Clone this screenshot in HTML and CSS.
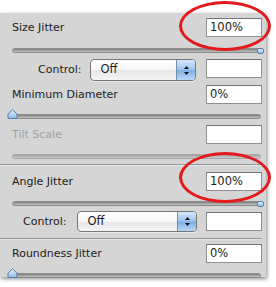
FILE: index.html
```html
<!DOCTYPE html>
<html>
  <head>
    <meta charset="utf-8" />
    <title>Shape Dynamics</title>
    <link rel="stylesheet" href="styles.css">
  </head>
  <body>
    <div class="page">
      <section class="panel">
        <div class="field">
          <span class="label">Size Jitter</span>
          <span class="box">100%</span>
        </div>
        <div class="track"><span class="knob knob-max"></span></div>

        <div class="field control">
          <span class="label">Control:</span>
          <span class="select">
            <span class="select-value">Off</span>
            <span class="stepper">
              <svg width="7" height="11" viewBox="0 0 7 11">
                <path d="M3.5 1 L6 4 H1 Z" fill="#111" />
                <path d="M3.5 10 L6 7 H1 Z" fill="#111" />
              </svg>
            </span>
          </span>
          <span class="box"></span>
        </div>

        <div class="field field-tight">
          <span class="label">Minimum Diameter</span>
          <span class="box">0%</span>
        </div>
        <div class="track">
          <svg class="knob-min" width="11" height="10" viewBox="0 0 11 10">
            <defs>
              <linearGradient id="kg1" x1="0" y1="0" x2="0" y2="1">
                <stop offset="0" stop-color="#e6f1fd" />
                <stop offset="1" stop-color="#8ebbea" />
              </linearGradient>
            </defs>
            <path d="M1 9.5 V5 L5.5 0.8 L10 5 V9.5 Z" fill="url(#kg1)" stroke="#5d7fa6" />
          </svg>
        </div>

        <div class="field field-gap">
          <span class="label label-off">Tilt Scale</span>
          <span class="box"></span>
        </div>
        <div class="track track-off"></div>

        <hr class="divider" />

        <div class="field field-gap">
          <span class="label">Angle Jitter</span>
          <span class="box">100%</span>
        </div>
        <div class="track track-near"><span class="knob knob-max"></span></div>

        <div class="field control control-wide">
          <span class="label">Control:</span>
          <span class="select">
            <span class="select-value">Off</span>
            <span class="stepper">
              <svg width="7" height="11" viewBox="0 0 7 11">
                <path d="M3.5 1 L6 4 H1 Z" fill="#111" />
                <path d="M3.5 10 L6 7 H1 Z" fill="#111" />
              </svg>
            </span>
          </span>
          <span class="box"></span>
        </div>

        <hr class="divider divider-low" />

        <div class="field field-tight">
          <span class="label">Roundness Jitter</span>
          <span class="box">0%</span>
        </div>
        <div class="track track-near">
          <svg class="knob-min" width="11" height="10" viewBox="0 0 11 10">
            <defs>
              <linearGradient id="kg2" x1="0" y1="0" x2="0" y2="1">
                <stop offset="0" stop-color="#e6f1fd" />
                <stop offset="1" stop-color="#8ebbea" />
              </linearGradient>
            </defs>
            <path d="M1 9.5 V5 L5.5 0.8 L10 5 V9.5 Z" fill="url(#kg2)" stroke="#5d7fa6" />
          </svg>
        </div>
      </section>

      <!-- highlight rings drawn over the panel -->
      <span class="ring ring-top"></span>
      <span class="ring ring-bottom"></span>
    </div>
  </body>
</html>
```

FILE: styles.css
```css
/* Basics */
body,
html {
  margin: 0;
  padding: 0;
}
body {
  background: #fff;
  color: #1c1c1c;
  font-family: "DejaVu Sans", Verdana, sans-serif;
  font-size: 11px;
}
* {
  box-sizing: border-box;
}
.page {
  position: relative;
  width: 276px;
  height: 287px;
  overflow: hidden;
}

/* Panel */
.panel {
  margin-top: 13px;
  width: 266px;
  height: 264px;
  padding: 5px 4px 0 12px;
  background: #d5d5d5;
  box-shadow: 1px 2px 4px rgba(0, 0, 0, 0.45);
}

.field {
  display: flex;
  align-items: center;
  height: 19px;
}
.field-tight {
  margin-top: 4px;
}
.field-gap {
  margin-top: 6px;
}
.label {
  flex: 1;
}
.label-off {
  color: #a2a2a2;
}
.box {
  width: 56px;
  height: 19px;
  margin-left: auto;
  padding-left: 3px;
  line-height: 17px;
  background: #fff;
  border: 1px solid #8f8f8f;
  border-top-color: #747474;
  font-size: 11.5px;
}

/* Control rows */
.control {
  margin-top: 6px;
  height: 22px;
  align-items: flex-start;
}
.control .label {
  flex: 0 0 auto;
  margin: 4px 9px 0 26px;
}
.control .select {
  width: 106px;
  height: 22px;
}
.control-wide {
  margin-top: 5px;
  height: 21px;
  align-items: center;
}
.control-wide .label {
  margin: 0 11px 0 11px;
}
.control-wide .select {
  width: 120px;
  height: 21px;
}
.select {
  display: flex;
  overflow: hidden;
  border: 1px solid #777;
  border-radius: 4px;
  background: linear-gradient(#fff, #f7f7f7 50%, #e7e7e7 52%, #f4f4f4);
  box-shadow: 0 1px 0 rgba(255, 255, 255, 0.5);
}
.select-value {
  flex: 1;
  padding-left: 9px;
  line-height: 19px;
  font-size: 11.5px;
}
.stepper {
  width: 19px;
  display: flex;
  align-items: center;
  justify-content: center;
  border-left: 1px solid #6f8fb4;
  background: linear-gradient(#d8e9fa, #9cc4ee 48%, #7cb0e6 52%, #b9d8f6);
}

/* Sliders */
.track {
  position: relative;
  margin: 11px 1px 0 0;
  height: 5px;
  border-radius: 3px;
  background: linear-gradient(#7e7e7e, #a9a9a9 60%, #c2c2c2);
  border: 1px solid #8a8a8a;
}
.track-near {
  margin-top: 9px;
}
.field + .track,
.field-tight + .track {
  margin-top: 10px;
}
.panel > .field:first-child + .track {
  margin-top: 11px;
}
.track-off {
  background: linear-gradient(#a3a3a3, #bdbdbd 60%, #c9c9c9);
  border-color: #a6a6a6;
}
.knob {
  position: absolute;
}
.knob-max {
  right: -4px;
  top: -1px;
  width: 7px;
  height: 6px;
  border-radius: 2px;
  border: 1px solid #5d7fa6;
  background: linear-gradient(#e0eefc, #8ebbea);
}
.knob-min {
  position: absolute;
  left: -6px;
  top: -6px;
}

/* Dividers */
.divider {
  margin: 5px 0 0 -12px;
  height: 2px;
  border: 0;
  border-top: 1px solid #979797;
  border-bottom: 1px solid #e4e4e4;
}
.divider-low {
  margin-top: 6px;
  margin-bottom: -2px;
}
.divider + .field {
  margin-top: 6px;
}

/* Red rings */
.ring {
  position: absolute;
  border: 3px solid #e31a1c;
  border-radius: 50%;
}
.ring-top {
  left: 179px;
  top: 1px;
  width: 92px;
  height: 50px;
}
.ring-bottom {
  left: 179px;
  top: 152px;
  width: 92px;
  height: 51px;
}
```
